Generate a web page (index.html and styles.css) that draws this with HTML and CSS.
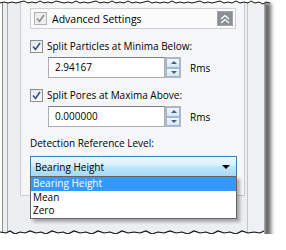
FILE: index.html
```html
<!DOCTYPE html>
<html>
<head>
<meta charset="utf-8">
<link rel="stylesheet" href="styles.css">
</head>
<body>
<div class="shot">
  <div class="rail-left"></div>
  <div class="page">
    <div class="group">
      <div class="group-head">
        <span class="chk chk-disabled"><svg viewBox="0 0 9 9" width="9" height="9"><path d="M1 4.5 L3.5 7.5 L8 1" fill="none" stroke="#8c8c8c" stroke-width="1.6"/></svg></span>
        <span class="head-label">Advanced Settings</span>
        <span class="collapse"><svg viewBox="0 0 14 14" width="14" height="14"><path d="M3 7 L7 3.5 L11 7 M3 11 L7 7.5 L11 11" fill="none" stroke="#fff" stroke-width="1.3"/></svg></span>
      </div>
      <div class="group-body">
        <label class="row-check">
          <span class="chk"><svg viewBox="0 0 9 9" width="9" height="9"><path d="M1 4.5 L3.5 7.5 L8 1" fill="none" stroke="#3a4f8c" stroke-width="1.6"/></svg></span>
          <span>Split Particles at Minima Below:</span>
        </label>
        <div class="row-input">
          <div class="textbox">2.94167</div>
          <div class="spin"><span class="sb up"></span><span class="sb down"></span></div>
          <span class="unit">Rms</span>
        </div>
        <label class="row-check">
          <span class="chk"><svg viewBox="0 0 9 9" width="9" height="9"><path d="M1 4.5 L3.5 7.5 L8 1" fill="none" stroke="#3a4f8c" stroke-width="1.6"/></svg></span>
          <span>Split Pores at Maxima Above:</span>
        </label>
        <div class="row-input">
          <div class="textbox">0.000000</div>
          <div class="spin"><span class="sb up"></span><span class="sb down"></span></div>
          <span class="unit">Rms</span>
        </div>
        <div class="label">Detection Reference Level:</div>
        <div class="combo-wrap">
          <div class="combo"><span>Bearing Height</span><span class="arrow"></span></div>
          <ul class="list">
            <li class="sel">Bearing Height</li>
            <li>Mean</li>
            <li>Zero</li>
          </ul>
        </div>
      </div>
    </div>
  </div>
  <div class="rail-right"></div>
  <svg class="tear-top" viewBox="0 0 270 8" width="270" height="8">
    <path d="M0 0 H270 V3 L266 2 L263 4 L259 2 L255 3 L251 1 L248 3 L244 2 L240 3 L236 1 L232 3 L228 2 L224 3 L220 1 L216 2 L212 3 L208 2 L204 3 L200 1 L196 2 L192 3 L188 2 L184 3 L180 2 L176 3 L172 1 L168 3 L164 2 L160 3 L156 2 L152 3 L148 1 L144 2 L140 3 L136 2 L132 3 L128 1 L124 3 L120 2 L116 3 L112 1 L108 3 L104 2 L100 3 L96 1 L92 2 L88 3 L84 2 L80 3 L76 1 L72 3 L68 2 L64 3 L60 2 L56 1 L52 3 L48 2 L44 3 L40 1 L36 3 L32 2 L28 3 L24 1 L20 2 L16 3 L12 2 L8 3 L4 2 L0 3 Z" fill="#fff"/>
    <path d="M270 3 L266 2 L263 4 L259 2 L255 3 L251 1 L248 3 L244 2 L240 3 L236 1 L232 3 L228 2 L224 3 L220 1 L216 2 L212 3 L208 2 L204 3 L200 1 L196 2 L192 3 L188 2 L184 3 L180 2 L176 3 L172 1 L168 3 L164 2 L160 3 L156 2 L152 3 L148 1 L144 2 L140 3 L136 2 L132 3 L128 1 L124 3 L120 2 L116 3 L112 1 L108 3 L104 2 L100 3 L96 1 L92 2 L88 3 L84 2 L80 3 L76 1 L72 3 L68 2 L64 3 L60 2 L56 1 L52 3 L48 2 L44 3 L40 1 L36 3 L32 2 L28 3 L24 1 L20 2 L16 3 L12 2 L8 3 L4 2 L0 3" fill="none" stroke="#111" stroke-width="1"/>
  </svg>
  <svg class="tear-bottom" viewBox="0 0 286 24" width="286" height="24">
    <defs><filter id="bl" x="-10%" y="-50%" width="120%" height="200%"><feGaussianBlur stdDeviation="1.8"/></filter></defs>
    <path d="M0 4 L6 5 L10 3 L15 6 L20 4 L25 5 L30 3 L36 5 L41 4 L46 6 L52 3 L58 5 L63 4 L68 6 L74 3 L80 5 L86 4 L92 6 L98 3 L104 5 L110 4 L116 6 L122 3 L128 5 L134 4 L140 5 L146 3 L152 6 L158 4 L164 5 L170 3 L176 5 L182 4 L188 6 L194 3 L200 5 L206 4 L212 6 L218 3 L224 5 L230 4 L236 6 L242 3 L248 5 L254 4 L260 5 L266 3 L272 5 V24 H0 Z" fill="#555" filter="url(#bl)" transform="translate(3 4)"/>
    <path d="M0 4 L6 5 L10 3 L15 6 L20 4 L25 5 L30 3 L36 5 L41 4 L46 6 L52 3 L58 5 L63 4 L68 6 L74 3 L80 5 L86 4 L92 6 L98 3 L104 5 L110 4 L116 6 L122 3 L128 5 L134 4 L140 5 L146 3 L152 6 L158 4 L164 5 L170 3 L176 5 L182 4 L188 6 L194 3 L200 5 L206 4 L212 6 L218 3 L224 5 L230 4 L236 6 L242 3 L248 5 L254 4 L260 5 L264 3 V24 H0 Z" fill="#fff"/>
    <path d="M0 4 L6 5 L10 3 L15 6 L20 4 L25 5 L30 3 L36 5 L41 4 L46 6 L52 3 L58 5 L63 4 L68 6 L74 3 L80 5 L86 4 L92 6 L98 3 L104 5 L110 4 L116 6 L122 3 L128 5 L134 4 L140 5 L146 3 L152 6 L158 4 L164 5 L170 3 L176 5 L182 4 L188 6 L194 3 L200 5 L206 4 L212 6 L218 3 L224 5 L230 4 L236 6 L242 3 L248 5 L254 4 L260 5 L264 3" fill="none" stroke="#111" stroke-width="1.2"/>
  </svg>
</div>
</body>
</html>
```
FILE: styles.css
```css
html, body {
  margin: 0;
  padding: 0;
  background: #fff;
}
body {
  font-family: "Open Sans", "Noto Sans", sans-serif;
  font-size: 10px;
  color: #000;
}
.shot {
  position: relative;
  width: 262px;
  height: 234px;
  margin-left: 2px;
  display: flex;
  background: #e8eaed;
  border-left: 1px solid #8c8c8c;
  border-right: 1px solid #8c8c8c;
  box-shadow: 5px 3px 4px rgba(0,0,0,0.6);
}
.rail-left {
  width: 4px;
  border-right: 1px solid #a9adb3;
  background: #eceef0;
}
.page {
  width: 225px;
  padding-left: 12px;
  padding-right: 2px;
  background: #eceef1;
  border-right: 1px solid #c3c7cc;
}
.rail-right {
  flex: 1;
  background: #eef0f2;
  border-right: 1px solid #a0a4a9;
}
.group {
  width: 225px;
  height: 196px;
  box-sizing: border-box;
  background: #f5f6f8;
  border-left: 1px solid #c9cdd2;
  border-right: 1px solid #c9cdd2;
  border-bottom: 1px solid #c9cdd2;
  padding: 8px 0 0 9px;
}
.group-head {
  width: 206px;
  height: 21px;
  box-sizing: border-box;
  border: 1px solid #cdd1d6;
  background: #fbfbfc;
  display: flex;
  align-items: center;
  padding-left: 3px;
  padding-right: 2px;
}
.head-label {
  margin-left: 5px;
  flex: 1;
  font-size: 10.5px;
}
.chk {
  width: 13px;
  height: 13px;
  box-sizing: border-box;
  border: 1px solid #8e8f8f;
  background: linear-gradient(#e6e8ec, #fbfbfc);
  display: inline-flex;
  align-items: center;
  justify-content: center;
  flex: none;
}
.chk-disabled {
  border-color: #b1b1b1;
  background: #eeeeee;
}
.collapse {
  width: 16px;
  height: 15px;
  background: #8a8f96;
  border: 1px solid #9fa4aa;
  box-sizing: border-box;
  display: flex;
  align-items: center;
  justify-content: center;
}
.group-body {
  display: flex;
  flex-direction: column;
}
.row-check {
  display: flex;
  align-items: center;
  gap: 4px;
  height: 14px;
  margin-top: 10px;
}
.row-input {
  display: flex;
  align-items: center;
  margin-top: 4px;
  margin-left: 18px;
  height: 21px;
}
.textbox {
  width: 117px;
  height: 21px;
  box-sizing: border-box;
  border: 1px solid #abadb3;
  border-top-color: #7a7d83;
  background: #fff;
  padding-left: 6px;
  line-height: 19px;
}
.spin {
  width: 16px;
  height: 21px;
  display: flex;
  flex-direction: column;
  border: 1px solid #b5b8bd;
  box-sizing: border-box;
}
.sb {
  flex: 1;
  background: linear-gradient(#f4f8fc, #d4e6f7);
  border: 1px solid #9eb7d4;
  position: relative;
}
.sb.up::after, .sb.down::after {
  content: "";
  position: absolute;
  left: 4px;
  top: 2px;
  border-left: 3px solid transparent;
  border-right: 3px solid transparent;
}
.sb.up::after { border-bottom: 3px solid #465e86; }
.sb.down::after { border-top: 3px solid #465e86; }
.unit {
  margin-left: 9px;
}
.label {
  margin-top: 9px;
  height: 14px;
  line-height: 14px;
}
.combo-wrap {
  position: relative;
  margin-top: 6px;
  width: 207px;
}
.combo {
  height: 21px;
  box-sizing: border-box;
  border: 1px solid #3c7fb1;
  background: linear-gradient(#eaf6fd 0%, #d9f0fc 45%, #bee6fd 50%, #a7d9f5 100%);
  display: flex;
  align-items: center;
  justify-content: space-between;
  padding: 0 4px;
}
.arrow {
  width: 0;
  height: 0;
  border-left: 4px solid transparent;
  border-right: 4px solid transparent;
  border-top: 4px solid #000;
  margin-right: 2px;
}
.list {
  position: absolute;
  left: 0;
  top: 20px;
  width: 207px;
  margin: 0;
  padding: 0;
  list-style: none;
  box-sizing: border-box;
  border: 1px solid #646464;
  background: #fff;
  box-shadow: 3px 3px 3px rgba(0,0,0,0.3);
}
.list li {
  height: 13.5px;
  line-height: 13.5px;
  padding-left: 2px;
}
.list li.sel {
  background: #3399ff;
  color: #fff;
}
.tear-top {
  position: absolute;
  left: -3px;
  top: 0;
}
.tear-bottom {
  position: absolute;
  left: -3px;
  top: 228px;
}
```
